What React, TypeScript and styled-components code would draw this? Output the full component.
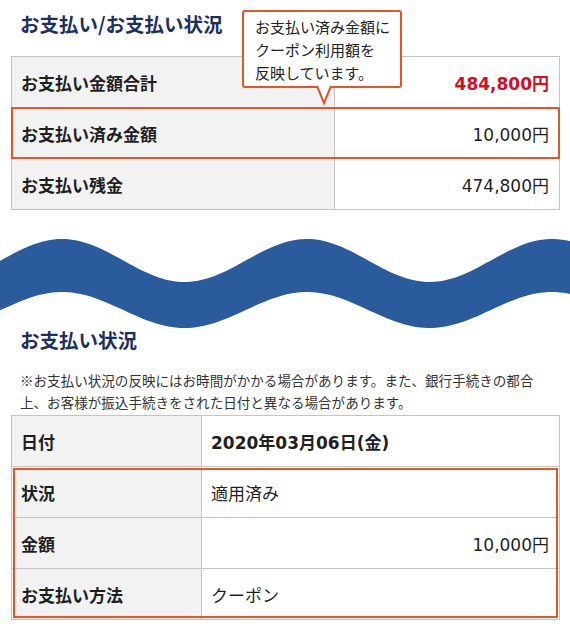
import React from "react";
import styled, { createGlobalStyle } from "styled-components";

const GlobalStyle = createGlobalStyle`
  html, body {
    margin: 0;
    padding: 0;
    background: #ffffff;
  }
  body {
    font-family: "Noto Sans CJK JP", "Noto Sans", sans-serif;
    color: #222;
  }
`;

const Page = styled.div`
  width: 570px;
  display: flex;
  flex-direction: column;
`;

const Section = styled.section<{ $top: number }>`
  padding: ${(p) => p.$top}px 10px 0 11px;
  display: flex;
  flex-direction: column;
`;

const Heading = styled.h2<{ $gap: number; $lh: number }>`
  margin: 0 0 ${(p) => p.$gap}px 9px;
  font-size: 19.5px;
  line-height: ${(p) => p.$lh}px;
  font-weight: 700;
  color: #1c2f5e;
`;

const HeadWrap = styled.div`
  position: relative;
`;

const Tooltip = styled.div`
  position: absolute;
  left: 231px;
  top: 0;
  width: 156px;
  height: 74px;
  border: 2px solid #e2562b;
  border-radius: 3px;
  background: #fff;
  z-index: 3;
`;

const TooltipText = styled.p`
  margin: 0;
  padding: 3px 0 0 11px;
  font-size: 15px;
  line-height: 23px;
  color: #222;
  white-space: nowrap;
`;

const TooltipArrow = styled.svg`
  position: absolute;
  left: 73px;
  top: 74px;
  width: 14px;
  height: 19px;
  overflow: visible;
`;

const Table = styled.div`
  border: 1px solid #c4c4c4;
  display: flex;
  flex-direction: column;
`;

const Row = styled.div<{ $cols: string; $first?: boolean }>`
  display: grid;
  grid-template-columns: ${(p) => p.$cols};
  height: 50px;
  border-top: ${(p) => (p.$first ? "none" : "1px solid #c4c4c4")};
`;

const Group = styled.div<{ $inset: string }>`
  position: relative;
  display: flex;
  flex-direction: column;
  &::after {
    content: "";
    position: absolute;
    inset: ${(p) => p.$inset};
    border: 2px solid #e2562b;
    pointer-events: none;
  }
`;

const Label = styled.div`
  background: #f2f2f2;
  border-right: 1px solid #c4c4c4;
  display: flex;
  align-items: center;
  padding-left: 9px;
  font-size: 17px;
  font-weight: 700;
  color: #1f1f1f;
`;

const Value = styled.div<{ $align?: "left" | "right"; $bold?: boolean; $red?: boolean }>`
  background: #fff;
  display: flex;
  align-items: center;
  justify-content: ${(p) => (p.$align === "right" ? "flex-end" : "flex-start")};
  padding: 0 10px 0 9px;
  font-family: "DejaVu Sans", "Noto Sans CJK JP", sans-serif;
  font-size: 17px;
  font-weight: ${(p) => (p.$bold ? 700 : 400)};
  color: ${(p) => (p.$red ? "#d20f1f" : "#1f1f1f")};
`;

const WaveSvg = styled.svg`
  display: block;
  width: 570px;
  height: 96px;
  margin-top: 24px;
`;

const Note = styled.p`
  margin: 0 0 2px 9px;
  font-size: 13.55px;
  line-height: 22px;
  color: #333;
  white-space: nowrap;
`;

function wavePath(): string {
  const period = 245;
  const phase = 62;
  const off = 234;
  const top: string[] = [];
  const bottom: string[] = [];
  for (let x = -10; x <= 580; x += 4) {
    const c = Math.cos((2 * Math.PI * (x - phase)) / period);
    top.push(`${x},${(260.5 - 21.5 * c - off).toFixed(2)}`);
  }
  for (let x = 580; x >= -10; x -= 4) {
    const c = Math.cos((2 * Math.PI * (x - phase)) / period);
    bottom.push(`${x},${(310 - 18 * c - off).toFixed(2)}`);
  }
  return `M${top.join(" L")} L${bottom.join(" L")} Z`;
}

const COLS1 = "323px 1fr";
const COLS2 = "190px 1fr";

export default function App() {
  return (
    <Page>
      <GlobalStyle />
      <Section $top={10}>
        <HeadWrap>
          <Heading $gap={18} $lh={28}>
            お支払い/お支払い状況
          </Heading>
          <Tooltip>
            <TooltipText>
              お支払い済み金額に
              <br />
              クーポン利用額を
              <br />
              反映しています。
            </TooltipText>
            <TooltipArrow viewBox="0 0 14 19">
              <path d="M0 0 L7 17 L14 0" fill="#fff" stroke="#e2562b" strokeWidth="2" />
            </TooltipArrow>
          </Tooltip>
        </HeadWrap>
        <Table>
          <Row $cols={COLS1} $first>
            <Label>お支払い金額合計</Label>
            <Value $align="right" $bold $red>
              484,800円
            </Value>
          </Row>
          <Group $inset="0 -1px -1px -1px">
            <Row $cols={COLS1}>
              <Label>お支払い済み金額</Label>
              <Value $align="right">10,000円</Value>
            </Row>
          </Group>
          <Row $cols={COLS1}>
            <Label>お支払い残金</Label>
            <Value $align="right">474,800円</Value>
          </Row>
        </Table>
      </Section>

      <WaveSvg viewBox="0 0 570 96" preserveAspectRatio="none">
        <path d={wavePath()} fill="#2a5b9c" />
      </WaveSvg>

      <Section $top={0}>
        <Heading $gap={19} $lh={20}>
          お支払い状況
        </Heading>
        <Note>
          ※お支払い状況の反映にはお時間がかかる場合があります。また、銀行手続きの都合
          <br />
          上、お客様が振込手続きをされた日付と異なる場合があります。
        </Note>
        <Table>
          <Row $cols={COLS2} $first>
            <Label>日付</Label>
            <Value $bold>2020年03月06日(金)</Value>
          </Row>
          <Group $inset="2px 1px 1px 1px">
            <Row $cols={COLS2}>
              <Label>状況</Label>
              <Value>適用済み</Value>
            </Row>
            <Row $cols={COLS2}>
              <Label>金額</Label>
              <Value $align="right">10,000円</Value>
            </Row>
            <Row $cols={COLS2}>
              <Label>お支払い方法</Label>
              <Value>クーポン</Value>
            </Row>
          </Group>
        </Table>
      </Section>
    </Page>
  );
}
